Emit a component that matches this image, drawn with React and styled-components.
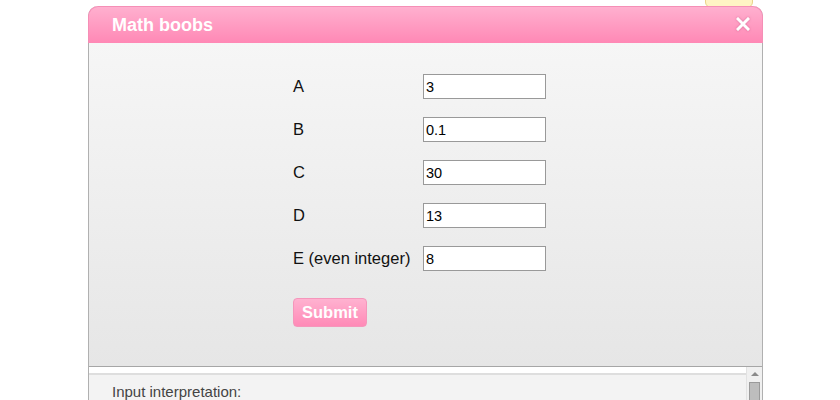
import styled, { createGlobalStyle } from "styled-components";

const GlobalStyle = createGlobalStyle`
  html, body {
    margin: 0;
    padding: 0;
    background: #ffffff;
    font-family: "Liberation Sans", Arial, sans-serif;
  }
  #root {
    height: 400px;
    overflow: hidden;
  }
`;

const fields = [
  { label: "A", value: "3" },
  { label: "B", value: "0.1" },
  { label: "C", value: "30" },
  { label: "D", value: "13" },
  { label: "E (even integer)", value: "8" },
];

const CloseIcon = () => (
  <svg width="14" height="14" viewBox="0 0 14 14">
    <path
      d="M2 2 L12 12 M12 2 L2 12"
      stroke="#ffffff"
      strokeWidth="3"
      strokeLinecap="square"
    />
  </svg>
);

const App = () => {
  return (
    <>
      <GlobalStyle />
      <Page>
        <TooltipTab />
        <Dialog>
          <Header>
            <Title>Math boobs</Title>
            <CloseBtn>
              <CloseIcon />
            </CloseBtn>
          </Header>
          <FormBody>
            <FormGrid>
              {fields.map((f) => (
                <Row key={f.label}>
                  <Label>{f.label}</Label>
                  <Input defaultValue={f.value} />
                </Row>
              ))}
            </FormGrid>
            <SubmitBtn>Submit</SubmitBtn>
          </FormBody>
          <Divider />
          <ResultPanel>
            <ResultContent>
              <ResultText>Input interpretation:</ResultText>
            </ResultContent>
            <ScrollBar>
              <ScrollArrow />
              <ScrollThumb />
            </ScrollBar>
          </ResultPanel>
        </Dialog>
      </Page>
    </>
  );
};

const Page = styled.div`
  position: relative;
  padding: 6px 0 0 88px;
`;

const TooltipTab = styled.div`
  position: absolute;
  left: 705px;
  top: -8px;
  width: 46px;
  height: 14px;
  background: #fff4c4;
  border: 1px solid #e8d48a;
  border-radius: 6px;
`;

const Dialog = styled.div`
  position: relative;
  width: 673px;
  border-left: 1px solid #b0b0b0;
  border-right: 1px solid #b0b0b0;
  border-radius: 10px 10px 0 0;
`;

const Header = styled.div`
  display: flex;
  align-items: center;
  justify-content: space-between;
  height: 37px;
  margin: 0 -1px;
  padding: 0 12px 0 23px;
  background: linear-gradient(#ffb0cf, #ff88b5);
  border: 1px solid #f58fb6;
  border-bottom: none;
  border-radius: 10px 10px 0 0;
  box-sizing: border-box;
`;

const Title = styled.h1`
  margin: 0;
  color: #ffffff;
  font-size: 18px;
  font-weight: bold;
`;

const CloseBtn = styled.span`
  display: flex;
  margin-top: -3px;
  filter: drop-shadow(0 0 1px rgba(180, 60, 110, 0.5));
`;

const FormBody = styled.div`
  display: flex;
  flex-direction: column;
  align-items: flex-start;
  padding: 31px 0 39px 204px;
  background: linear-gradient(#f6f6f6, #e6e6e6);
`;

const FormGrid = styled.div`
  display: flex;
  flex-direction: column;
  gap: 18px;
`;

const Row = styled.div`
  display: grid;
  grid-template-columns: 130px 123px;
  align-items: center;
`;

const Label = styled.span`
  color: #111111;
  font-size: 16.5px;
`;

const Input = styled.input`
  width: 123px;
  height: 25px;
  box-sizing: border-box;
  padding: 1px 2px;
  border: 1px solid #999999;
  background: #ffffff;
  font-family: "Liberation Sans", Arial, sans-serif;
  font-size: 14.5px;
  color: #000000;
`;

const SubmitBtn = styled.button`
  margin-top: 27px;
  width: 74px;
  height: 29px;
  padding: 0;
  background: linear-gradient(#ffb2d0, #ff8ab7);
  border: 1px solid #f596bb;
  border-radius: 4px;
  color: #ffffff;
  font-family: "Liberation Sans", Arial, sans-serif;
  font-size: 16.5px;
  font-weight: bold;
`;

const Divider = styled.div`
  height: 6px;
  border-top: 1px solid #a6a6a6;
  background: #ffffff;
`;

const ResultPanel = styled.div`
  display: flex;
  height: 40px;
  background: #f3f3f3;
`;

const ResultContent = styled.div`
  flex: 1;
  border-top: 2px solid #dedede;
  padding: 8px 0 0 23px;
`;

const ResultText = styled.span`
  color: #444444;
  font-size: 15px;
`;

const ScrollBar = styled.div`
  position: relative;
  width: 15px;
  margin-top: -6px;
  background: #f0f0f0;
  border-left: 1px solid #e2e2e2;
`;

const ScrollArrow = styled.div`
  position: absolute;
  left: 4px;
  top: 5px;
  width: 0;
  height: 0;
  border-left: 4px solid transparent;
  border-right: 4px solid transparent;
  border-bottom: 4px solid #8a8a8a;
`;

const ScrollThumb = styled.div`
  position: absolute;
  left: 2px;
  top: 15px;
  width: 9px;
  height: 40px;
  background: #bdbdbd;
  border: 1px solid #9a9a9a;
`;

export default App;
